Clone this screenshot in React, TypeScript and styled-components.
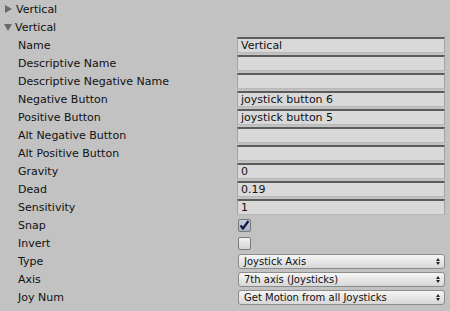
import React from 'react';
import styled, { createGlobalStyle } from 'styled-components';

const GlobalStyle = createGlobalStyle`
  html, body {
    margin: 0;
    padding: 0;
    background: #c2c2c2;
  }
  body {
    font-family: "DejaVu Sans", Verdana, sans-serif;
    font-size: 11px;
    color: #111;
  }
`;

const Panel = styled.div`
  width: 450px;
  height: 311px;
  overflow: hidden;
  background: #c2c2c2;
  display: flex;
  flex-direction: column;
`;

const FoldRow = styled.div`
  flex: 0 0 18px;
  height: 18px;
  display: flex;
  align-items: center;
  padding-left: 4px;
  gap: 3px;
`;

const Arrow = styled.span<{ $open?: boolean }>`
  width: 0;
  height: 0;
  ${(p) =>
    p.$open
      ? `border-left: 4px solid transparent; border-right: 4px solid transparent; border-top: 7px solid #6a6a6a; margin-top: 1px;`
      : `border-top: 4px solid transparent; border-bottom: 4px solid transparent; border-left: 7px solid #6a6a6a; margin-left: 1px; margin-right: 1px;`}
`;

const Row = styled.div`
  flex: 0 0 18px;
  height: 18px;
  display: grid;
  grid-template-columns: 237px 208px;
  align-items: center;
`;

const Label = styled.span`
  padding-left: 18px;
  white-space: nowrap;
`;

const TextField = styled.div`
  height: 16px;
  box-sizing: border-box;
  background: #d9d9d9;
  border: 1px solid #a4a4a4;
  border-top: 2px solid #5c5c5c;
  border-bottom-color: #b8b8b8;
  padding-left: 3px;
  line-height: 13px;
  white-space: nowrap;
  overflow: hidden;
`;

const Check = styled.div<{ $on?: boolean }>`
  width: 13px;
  height: 13px;
  box-sizing: border-box;
  margin-left: 1px;
  border: 1px solid #7a7a7a;
  border-radius: 2px;
  background: ${(p) => (p.$on ? 'linear-gradient(#c8d0dc, #a9b4c4)' : 'linear-gradient(#f2f2f2, #d4d4d4)')};
  display: flex;
  align-items: center;
  justify-content: center;
`;

const Popup = styled.div`
  height: 15px;
  box-sizing: border-box;
  margin-left: 1px;
  border: 1px solid #8c8c8c;
  border-radius: 3px;
  background: linear-gradient(#f6f6f6, #d7d7d7);
  display: flex;
  align-items: center;
  justify-content: space-between;
  padding: 0 4px 0 5px;
  font-size: 10px;
  white-space: nowrap;
`;

const Spinner = styled.span`
  display: flex;
  flex-direction: column;
  gap: 1px;
  &::before,
  &::after {
    content: '';
    width: 0;
    height: 0;
    border-left: 2px solid transparent;
    border-right: 2px solid transparent;
  }
  &::before {
    border-bottom: 3px solid #222;
  }
  &::after {
    border-top: 3px solid #222;
  }
`;

const CheckMark = () => (
  <svg width="11" height="11" viewBox="0 0 11 11">
    <path d="M1.5 5.5 L4 8.5 L9.5 1" fill="none" stroke="#0d1a3a" strokeWidth="2.2" />
  </svg>
);

const textRows: [string, string][] = [
  ['Name', 'Vertical'],
  ['Descriptive Name', ''],
  ['Descriptive Negative Name', ''],
  ['Negative Button', 'joystick button 6'],
  ['Positive Button', 'joystick button 5'],
  ['Alt Negative Button', ''],
  ['Alt Positive Button', ''],
  ['Gravity', '0'],
  ['Dead', '0.19'],
  ['Sensitivity', '1'],
];

const popupRows: [string, string][] = [
  ['Type', 'Joystick Axis'],
  ['Axis', '7th axis (Joysticks)'],
  ['Joy Num', 'Get Motion from all Joysticks'],
];

export default function App() {
  return (
    <Panel>
      <GlobalStyle />
      <FoldRow>
        <Arrow />
        <span>Vertical</span>
      </FoldRow>
      <FoldRow>
        <Arrow $open />
        <span>Vertical</span>
      </FoldRow>
      {textRows.map(([label, value]) => (
        <Row key={label}>
          <Label>{label}</Label>
          <TextField>{value}</TextField>
        </Row>
      ))}
      <Row>
        <Label>Snap</Label>
        <Check $on>
          <CheckMark />
        </Check>
      </Row>
      <Row>
        <Label>Invert</Label>
        <Check />
      </Row>
      {popupRows.map(([label, value]) => (
        <Row key={label}>
          <Label>{label}</Label>
          <Popup>
            <span>{value}</span>
            <Spinner />
          </Popup>
        </Row>
      ))}
    </Panel>
  );
}
